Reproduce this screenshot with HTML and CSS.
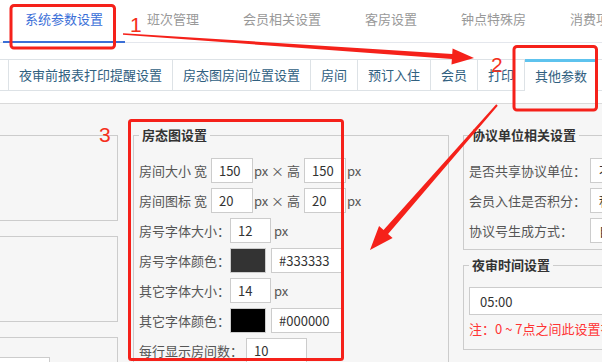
FILE: index.html
```html
<!DOCTYPE html>
<html lang="zh-CN">

<head>
  <meta charset="UTF-8">
  <meta name="viewport" content="width=device-width, initial-scale=1.0">
  <title>系统参数设置</title>
  <link rel="stylesheet" href="styles.css">
</head>

<body>
  <div class="page">
    <!-- 一级菜单 -->
    <nav class="topnav">
      <a class="tab on">系统参数设置</a>
      <a class="tab">班次管理</a>
      <a class="tab">会员相关设置</a>
      <a class="tab">客房设置</a>
      <a class="tab">钟点特殊房</a>
      <a class="tab">消费项目设置</a>
    </nav>

    <!-- 二级菜单 -->
    <div class="subtabs">
      <span class="subtab edge"></span>
      <span class="subtab">夜审前报表打印提醒设置</span>
      <span class="subtab">房态图房间位置设置</span>
      <span class="subtab">房间</span>
      <span class="subtab">预订入住</span>
      <span class="subtab">会员</span>
      <span class="subtab">打印</span>
      <span class="subtab on">其他参数</span>
    </div>

    <div class="content">
      <div class="col-left">
        <div class="box"></div>
        <div class="box"></div>
        <div class="box">
          <div class="box-input"></div>
        </div>
      </div>

      <fieldset class="group room-map">
        <legend>房态图设置</legend>
        <div class="row">
          <span>房间大小 宽</span><input class="field w42 gap" value="150"><span class="unit">px × 高</span><input class="field w42 gap" value="150"><span class="unit">px</span>
        </div>
        <div class="row">
          <span>房间图标 宽</span><input class="field w42 gap" value="20"><span class="unit">px × 高</span><input class="field w42 gap" value="20"><span class="unit">px</span>
        </div>
        <div class="row">
          <span>房号字体大小：</span><input class="field w41" value="12"><span class="unit wide">px</span>
        </div>
        <div class="row">
          <span>房号字体颜色：</span><span class="swatch dark"></span><input class="field w71 gap5" value="#333333">
        </div>
        <div class="row">
          <span>其它字体大小：</span><input class="field w41" value="14"><span class="unit wide">px</span>
        </div>
        <div class="row">
          <span>其它字体颜色：</span><span class="swatch black"></span><input class="field w71 gap5" value="#000000">
        </div>
        <div class="row">
          <span>每行显示房间数：</span><input class="field w61 gap3" value="10">
        </div>
      </fieldset>

      <div class="col-right">
        <fieldset class="group">
          <legend>协议单位相关设置</legend>
          <div class="row">
            <span class="label">是否共享协议单位：</span><span class="select">不共享</span>
          </div>
          <div class="row">
            <span class="label">会员入住是否积分：</span><span class="select">积分</span>
          </div>
          <div class="row">
            <span class="label">协议号生成方式：</span><span class="select">自动生成</span>
          </div>
        </fieldset>

        <fieldset class="group audit">
          <legend>夜审时间设置</legend>
          <input class="field time" value="05:00">
          <p class="note">注：0 ~ 7点之间此设置有效</p>
        </fieldset>
      </div>
    </div>

    <!-- 截图上的红色标注 -->
    <svg class="marks" width="602" height="362" viewBox="0 0 602 362">
      <rect x="11" y="5.5" width="103.5" height="42.5" rx="3" />
      <rect x="514" y="46.5" width="82.5" height="63.5" rx="3" />
      <rect x="129.5" y="120.5" width="213" height="239" rx="2" />
      <polygon points="123.05,33.2 452.22,54.01 452.6,48.52 474,58 451.5,64.48 451.88,58.99 122.95,34.8" />
      <polygon points="496.25,104.34 383.55,229.97 379.04,226.02 370,250 392.58,237.88 388.07,233.93 497.75,105.66" />
      <text x="130" y="32">1</text>
      <text x="491" y="72">2</text>
      <text x="99" y="142">3</text>
    </svg>
  </div>
</body>

</html>
```

FILE: styles.css
```css
* {
  box-sizing: border-box;
}

body {
  margin: 0;
  font-family: "Noto Sans CJK SC", "Noto Sans", sans-serif;
  font-size: 13px;
  color: #555;
  background: #fff;
}

.page {
  position: relative;
  width: 602px;
  height: 362px;
  overflow: hidden;
}

/* 一级菜单 */
.topnav {
  display: flex;
  white-space: nowrap;
  border-bottom: 1px solid #e4e7ed;
}

.topnav .tab {
  flex: none;
  padding: 0 22px 3px;
  line-height: 38px;
  color: #999;
  border-bottom: 2px solid transparent;
  margin-bottom: -1px;
}

.topnav .tab:first-child {
  margin-left: 3px;
}

.topnav .tab.on {
  color: #3a6fd8;
  border-bottom-color: #3b6fd6;
}

/* 二级菜单 */
.subtabs {
  display: flex;
  align-items: flex-start;
  margin-top: 16px;
  height: 32px;
  white-space: nowrap;
  border-top: 1px solid #dde2e6;
  border-bottom: 1px solid #dde2e6;
}

.subtab {
  flex: none;
  height: 30px;
  padding: 0 10px;
  line-height: 30px;
  color: #30607f;
  border-right: 1px solid #dde2e6;
  background: #fff;
}

.subtab.edge {
  width: 9px;
  padding: 0;
}

.subtab.on {
  position: relative;
  height: 33px;
  margin: -1px 0 -2px;
  line-height: 28px;
  border-top: 3px solid #5ec3ee;
}

/* 内容区 */
.content {
  display: flex;
  align-items: flex-start;
  margin-top: 12px;
  min-height: 260px;
  padding-top: 22px;
  background: #f6f6f6;
  border-top: 1px solid #dadada;
}

.col-left {
  flex: none;
  width: 139px;
  margin-left: -21px;
  padding-top: 9px;
}

.box {
  height: 86px;
  margin-bottom: 15px;
  border: 1px solid #ccc;
}

.box-input {
  width: 70px;
  height: 28px;
  margin-top: 19px;
  background: #fff;
  border: 1px solid #ccc;
}

.group {
  flex: none;
  margin: 0;
  min-width: 0;
  padding: 14px 5px 6px;
  border: 1px solid #ccc;
}

.group legend {
  padding: 0 3px;
  line-height: 18px;
  font-weight: bold;
  color: #333;
}

.room-map {
  width: 316px;
  height: 260px;
  margin-left: 15px;
}

.col-right {
  flex: none;
  width: 220px;
  margin-left: 14px;
}

.row {
  display: flex;
  align-items: center;
  height: 25px;
  white-space: nowrap;
}

.row + .row {
  margin-top: 5px;
}

.field {
  height: 25px;
  padding: 0 0 0 7px;
  font: inherit;
  color: #333;
  background: #fff;
  border: 1px solid #ccc;
  border-radius: 0;
  outline: none;
}

.w41 { width: 41px; }
.w42 { width: 42px; }
.w61 { width: 61px; }
.w71 { width: 71px; }
.gap { margin-left: 4px; }
.gap3 { margin-left: 3px; }
.gap5 { margin-left: 5px; }

.unit {
  margin-left: 1px;
}

.unit.wide {
  margin-left: 3px;
}

.swatch {
  width: 36px;
  height: 25px;
  border: 1px solid #ccc;
}

.swatch.dark { background: #333; }
.swatch.black { background: #000; }

.label {
  flex: none;
  width: 121px;
}

.select {
  flex: none;
  width: 90px;
  height: 25px;
  padding-left: 8px;
  line-height: 23px;
  color: #333;
  background: #fff;
  border: 1px solid #ccc;
}

.audit {
  margin-top: 6px;
  padding: 13px 5px 11px;
}

.field.time {
  display: block;
  width: 100%;
  height: 28px;
  padding-left: 10px;
}

.note {
  margin: 5px 0 0;
  line-height: 18px;
  color: #f33;
  white-space: nowrap;
}

/* 红色标注 */
.marks {
  position: absolute;
  top: 0;
  left: 0;
  pointer-events: none;
}

.marks rect {
  fill: none;
  stroke: #f5211a;
  stroke-width: 3;
}

.marks polygon {
  fill: #f5211a;
}

.marks text {
  font-family: "Liberation Sans", sans-serif;
  font-size: 21px;
  fill: #f5301c;
}
```
